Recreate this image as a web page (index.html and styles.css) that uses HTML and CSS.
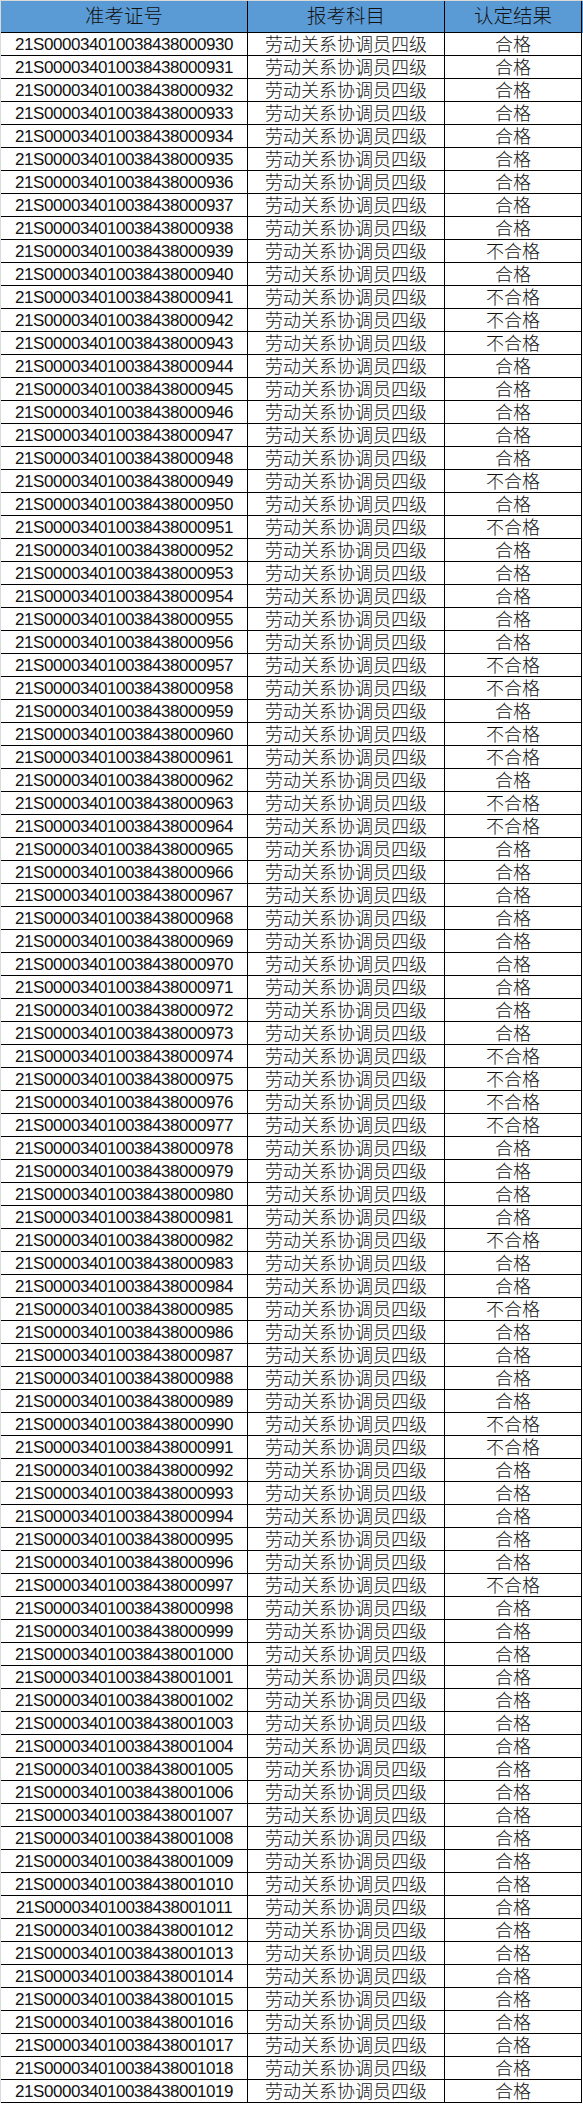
FILE: index.html
```html
<!DOCTYPE html>
<html lang="zh-CN">
<head>
<meta charset="utf-8">
<title>认定结果</title>
<link rel="stylesheet" href="styles.css">
</head>
<body>
<div class="sheet">
<div class="row head"><div class="c">准考证号</div><div class="c">报考科目</div><div class="c">认定结果</div></div>
<div class="row"><div class="c id">21S000034010038438000930</div><div class="c">劳动关系协调员四级</div><div class="c">合格</div></div>
<div class="row"><div class="c id">21S000034010038438000931</div><div class="c">劳动关系协调员四级</div><div class="c">合格</div></div>
<div class="row"><div class="c id">21S000034010038438000932</div><div class="c">劳动关系协调员四级</div><div class="c">合格</div></div>
<div class="row"><div class="c id">21S000034010038438000933</div><div class="c">劳动关系协调员四级</div><div class="c">合格</div></div>
<div class="row"><div class="c id">21S000034010038438000934</div><div class="c">劳动关系协调员四级</div><div class="c">合格</div></div>
<div class="row"><div class="c id">21S000034010038438000935</div><div class="c">劳动关系协调员四级</div><div class="c">合格</div></div>
<div class="row"><div class="c id">21S000034010038438000936</div><div class="c">劳动关系协调员四级</div><div class="c">合格</div></div>
<div class="row"><div class="c id">21S000034010038438000937</div><div class="c">劳动关系协调员四级</div><div class="c">合格</div></div>
<div class="row"><div class="c id">21S000034010038438000938</div><div class="c">劳动关系协调员四级</div><div class="c">合格</div></div>
<div class="row"><div class="c id">21S000034010038438000939</div><div class="c">劳动关系协调员四级</div><div class="c">不合格</div></div>
<div class="row"><div class="c id">21S000034010038438000940</div><div class="c">劳动关系协调员四级</div><div class="c">合格</div></div>
<div class="row"><div class="c id">21S000034010038438000941</div><div class="c">劳动关系协调员四级</div><div class="c">不合格</div></div>
<div class="row"><div class="c id">21S000034010038438000942</div><div class="c">劳动关系协调员四级</div><div class="c">不合格</div></div>
<div class="row"><div class="c id">21S000034010038438000943</div><div class="c">劳动关系协调员四级</div><div class="c">不合格</div></div>
<div class="row"><div class="c id">21S000034010038438000944</div><div class="c">劳动关系协调员四级</div><div class="c">合格</div></div>
<div class="row"><div class="c id">21S000034010038438000945</div><div class="c">劳动关系协调员四级</div><div class="c">合格</div></div>
<div class="row"><div class="c id">21S000034010038438000946</div><div class="c">劳动关系协调员四级</div><div class="c">合格</div></div>
<div class="row"><div class="c id">21S000034010038438000947</div><div class="c">劳动关系协调员四级</div><div class="c">合格</div></div>
<div class="row"><div class="c id">21S000034010038438000948</div><div class="c">劳动关系协调员四级</div><div class="c">合格</div></div>
<div class="row"><div class="c id">21S000034010038438000949</div><div class="c">劳动关系协调员四级</div><div class="c">不合格</div></div>
<div class="row"><div class="c id">21S000034010038438000950</div><div class="c">劳动关系协调员四级</div><div class="c">合格</div></div>
<div class="row"><div class="c id">21S000034010038438000951</div><div class="c">劳动关系协调员四级</div><div class="c">不合格</div></div>
<div class="row"><div class="c id">21S000034010038438000952</div><div class="c">劳动关系协调员四级</div><div class="c">合格</div></div>
<div class="row"><div class="c id">21S000034010038438000953</div><div class="c">劳动关系协调员四级</div><div class="c">合格</div></div>
<div class="row"><div class="c id">21S000034010038438000954</div><div class="c">劳动关系协调员四级</div><div class="c">合格</div></div>
<div class="row"><div class="c id">21S000034010038438000955</div><div class="c">劳动关系协调员四级</div><div class="c">合格</div></div>
<div class="row"><div class="c id">21S000034010038438000956</div><div class="c">劳动关系协调员四级</div><div class="c">合格</div></div>
<div class="row"><div class="c id">21S000034010038438000957</div><div class="c">劳动关系协调员四级</div><div class="c">不合格</div></div>
<div class="row"><div class="c id">21S000034010038438000958</div><div class="c">劳动关系协调员四级</div><div class="c">不合格</div></div>
<div class="row"><div class="c id">21S000034010038438000959</div><div class="c">劳动关系协调员四级</div><div class="c">合格</div></div>
<div class="row"><div class="c id">21S000034010038438000960</div><div class="c">劳动关系协调员四级</div><div class="c">不合格</div></div>
<div class="row"><div class="c id">21S000034010038438000961</div><div class="c">劳动关系协调员四级</div><div class="c">不合格</div></div>
<div class="row"><div class="c id">21S000034010038438000962</div><div class="c">劳动关系协调员四级</div><div class="c">合格</div></div>
<div class="row"><div class="c id">21S000034010038438000963</div><div class="c">劳动关系协调员四级</div><div class="c">不合格</div></div>
<div class="row"><div class="c id">21S000034010038438000964</div><div class="c">劳动关系协调员四级</div><div class="c">不合格</div></div>
<div class="row"><div class="c id">21S000034010038438000965</div><div class="c">劳动关系协调员四级</div><div class="c">合格</div></div>
<div class="row"><div class="c id">21S000034010038438000966</div><div class="c">劳动关系协调员四级</div><div class="c">合格</div></div>
<div class="row"><div class="c id">21S000034010038438000967</div><div class="c">劳动关系协调员四级</div><div class="c">合格</div></div>
<div class="row"><div class="c id">21S000034010038438000968</div><div class="c">劳动关系协调员四级</div><div class="c">合格</div></div>
<div class="row"><div class="c id">21S000034010038438000969</div><div class="c">劳动关系协调员四级</div><div class="c">合格</div></div>
<div class="row"><div class="c id">21S000034010038438000970</div><div class="c">劳动关系协调员四级</div><div class="c">合格</div></div>
<div class="row"><div class="c id">21S000034010038438000971</div><div class="c">劳动关系协调员四级</div><div class="c">合格</div></div>
<div class="row"><div class="c id">21S000034010038438000972</div><div class="c">劳动关系协调员四级</div><div class="c">合格</div></div>
<div class="row"><div class="c id">21S000034010038438000973</div><div class="c">劳动关系协调员四级</div><div class="c">合格</div></div>
<div class="row"><div class="c id">21S000034010038438000974</div><div class="c">劳动关系协调员四级</div><div class="c">不合格</div></div>
<div class="row"><div class="c id">21S000034010038438000975</div><div class="c">劳动关系协调员四级</div><div class="c">不合格</div></div>
<div class="row"><div class="c id">21S000034010038438000976</div><div class="c">劳动关系协调员四级</div><div class="c">不合格</div></div>
<div class="row"><div class="c id">21S000034010038438000977</div><div class="c">劳动关系协调员四级</div><div class="c">不合格</div></div>
<div class="row"><div class="c id">21S000034010038438000978</div><div class="c">劳动关系协调员四级</div><div class="c">合格</div></div>
<div class="row"><div class="c id">21S000034010038438000979</div><div class="c">劳动关系协调员四级</div><div class="c">合格</div></div>
<div class="row"><div class="c id">21S000034010038438000980</div><div class="c">劳动关系协调员四级</div><div class="c">合格</div></div>
<div class="row"><div class="c id">21S000034010038438000981</div><div class="c">劳动关系协调员四级</div><div class="c">合格</div></div>
<div class="row"><div class="c id">21S000034010038438000982</div><div class="c">劳动关系协调员四级</div><div class="c">不合格</div></div>
<div class="row"><div class="c id">21S000034010038438000983</div><div class="c">劳动关系协调员四级</div><div class="c">合格</div></div>
<div class="row"><div class="c id">21S000034010038438000984</div><div class="c">劳动关系协调员四级</div><div class="c">合格</div></div>
<div class="row"><div class="c id">21S000034010038438000985</div><div class="c">劳动关系协调员四级</div><div class="c">不合格</div></div>
<div class="row"><div class="c id">21S000034010038438000986</div><div class="c">劳动关系协调员四级</div><div class="c">合格</div></div>
<div class="row"><div class="c id">21S000034010038438000987</div><div class="c">劳动关系协调员四级</div><div class="c">合格</div></div>
<div class="row"><div class="c id">21S000034010038438000988</div><div class="c">劳动关系协调员四级</div><div class="c">合格</div></div>
<div class="row"><div class="c id">21S000034010038438000989</div><div class="c">劳动关系协调员四级</div><div class="c">合格</div></div>
<div class="row"><div class="c id">21S000034010038438000990</div><div class="c">劳动关系协调员四级</div><div class="c">不合格</div></div>
<div class="row"><div class="c id">21S000034010038438000991</div><div class="c">劳动关系协调员四级</div><div class="c">不合格</div></div>
<div class="row"><div class="c id">21S000034010038438000992</div><div class="c">劳动关系协调员四级</div><div class="c">合格</div></div>
<div class="row"><div class="c id">21S000034010038438000993</div><div class="c">劳动关系协调员四级</div><div class="c">合格</div></div>
<div class="row"><div class="c id">21S000034010038438000994</div><div class="c">劳动关系协调员四级</div><div class="c">合格</div></div>
<div class="row"><div class="c id">21S000034010038438000995</div><div class="c">劳动关系协调员四级</div><div class="c">合格</div></div>
<div class="row"><div class="c id">21S000034010038438000996</div><div class="c">劳动关系协调员四级</div><div class="c">合格</div></div>
<div class="row"><div class="c id">21S000034010038438000997</div><div class="c">劳动关系协调员四级</div><div class="c">不合格</div></div>
<div class="row"><div class="c id">21S000034010038438000998</div><div class="c">劳动关系协调员四级</div><div class="c">合格</div></div>
<div class="row"><div class="c id">21S000034010038438000999</div><div class="c">劳动关系协调员四级</div><div class="c">合格</div></div>
<div class="row"><div class="c id">21S000034010038438001000</div><div class="c">劳动关系协调员四级</div><div class="c">合格</div></div>
<div class="row"><div class="c id">21S000034010038438001001</div><div class="c">劳动关系协调员四级</div><div class="c">合格</div></div>
<div class="row"><div class="c id">21S000034010038438001002</div><div class="c">劳动关系协调员四级</div><div class="c">合格</div></div>
<div class="row"><div class="c id">21S000034010038438001003</div><div class="c">劳动关系协调员四级</div><div class="c">合格</div></div>
<div class="row"><div class="c id">21S000034010038438001004</div><div class="c">劳动关系协调员四级</div><div class="c">合格</div></div>
<div class="row"><div class="c id">21S000034010038438001005</div><div class="c">劳动关系协调员四级</div><div class="c">合格</div></div>
<div class="row"><div class="c id">21S000034010038438001006</div><div class="c">劳动关系协调员四级</div><div class="c">合格</div></div>
<div class="row"><div class="c id">21S000034010038438001007</div><div class="c">劳动关系协调员四级</div><div class="c">合格</div></div>
<div class="row"><div class="c id">21S000034010038438001008</div><div class="c">劳动关系协调员四级</div><div class="c">合格</div></div>
<div class="row"><div class="c id">21S000034010038438001009</div><div class="c">劳动关系协调员四级</div><div class="c">合格</div></div>
<div class="row"><div class="c id">21S000034010038438001010</div><div class="c">劳动关系协调员四级</div><div class="c">合格</div></div>
<div class="row"><div class="c id">21S000034010038438001011</div><div class="c">劳动关系协调员四级</div><div class="c">合格</div></div>
<div class="row"><div class="c id">21S000034010038438001012</div><div class="c">劳动关系协调员四级</div><div class="c">合格</div></div>
<div class="row"><div class="c id">21S000034010038438001013</div><div class="c">劳动关系协调员四级</div><div class="c">合格</div></div>
<div class="row"><div class="c id">21S000034010038438001014</div><div class="c">劳动关系协调员四级</div><div class="c">合格</div></div>
<div class="row"><div class="c id">21S000034010038438001015</div><div class="c">劳动关系协调员四级</div><div class="c">合格</div></div>
<div class="row"><div class="c id">21S000034010038438001016</div><div class="c">劳动关系协调员四级</div><div class="c">合格</div></div>
<div class="row"><div class="c id">21S000034010038438001017</div><div class="c">劳动关系协调员四级</div><div class="c">合格</div></div>
<div class="row"><div class="c id">21S000034010038438001018</div><div class="c">劳动关系协调员四级</div><div class="c">合格</div></div>
<div class="row"><div class="c id">21S000034010038438001019</div><div class="c">劳动关系协调员四级</div><div class="c">合格</div></div>
</div>
</body>
</html>
```

FILE: styles.css
```css
html, body {
  margin: 0;
  padding: 0;
  background: #ffffff;
}
body {
  font-family: "Liberation Sans", "Noto Sans CJK SC", sans-serif;
  color: #111111;
}
.sheet {
  width: 582px;
  border-left: 1px solid #d9d9d9;
  border-top: 1px solid #d9d9d9;
}
.row {
  display: grid;
  grid-template-columns: 247px 197px 137px;
  height: 23px;
}
.c {
  box-sizing: border-box;
  border-right: 1px solid #000000;
  border-bottom: 1px solid #000000;
  text-align: center;
  font-size: 18px;
  font-weight: 300;
  line-height: 22px;
  padding-top: 1px;
  white-space: nowrap;
  overflow: hidden;
}
.id {
  font-weight: 400;
  font-size: 17px;
  letter-spacing: -0.45px;
}
.head {
  height: 32px;
  background: #5b9bd5;
}
.head .c {
  font-size: 19.5px;
  line-height: 31px;
  padding-top: 0;
}
```
